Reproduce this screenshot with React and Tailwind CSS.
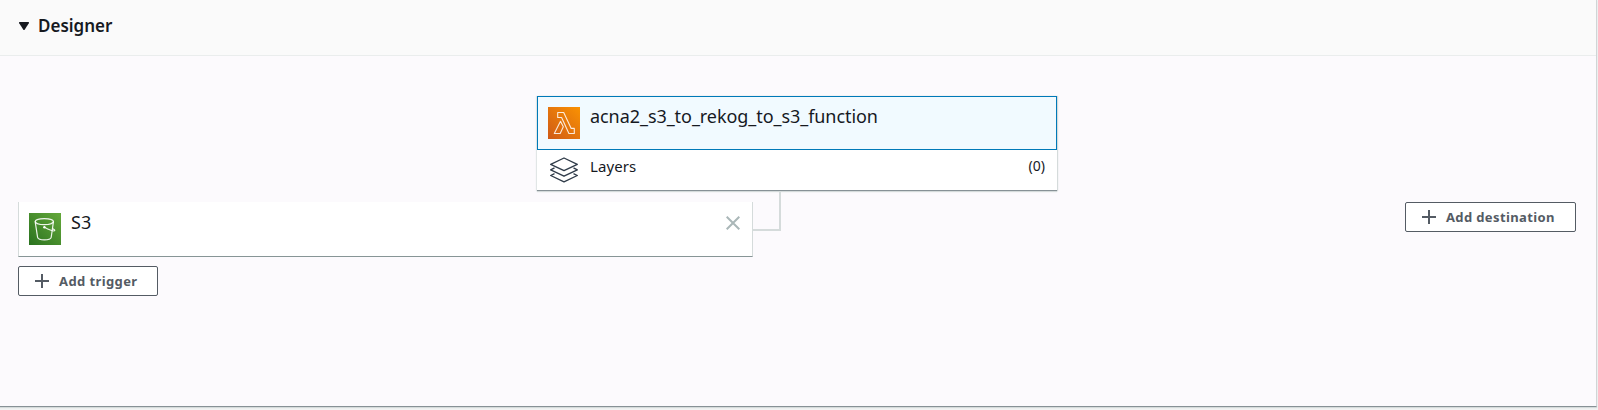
function LambdaIcon() {
  return (
    <svg width="32" height="32" viewBox="0 0 32 32" className="block shrink-0">
      <defs>
        <linearGradient id="lambdaFill" x1="0" y1="1" x2="1" y2="0">
          <stop offset="0" stopColor="#cf5a17" />
          <stop offset="1" stopColor="#fa9202" />
        </linearGradient>
      </defs>
      <rect width="32" height="32" fill="url(#lambdaFill)" />
      <path
        d="M9.7 5.5H15.7L23.2 21.4H26.3V26.5H20.9L13.6 10.5H9.7ZM12.5 14.3L15.3 19.8L12.2 26.5H6.3Z"
        fill="none"
        stroke="#fff"
        strokeOpacity="0.85"
        strokeWidth="1.1"
        strokeLinejoin="round"
      />
    </svg>
  );
}

function BucketIcon() {
  return (
    <svg width="32" height="32" viewBox="0 0 32 32" className="block shrink-0">
      <defs>
        <linearGradient id="bucketFill" x1="0" y1="1" x2="1" y2="0">
          <stop offset="0" stopColor="#2a721f" />
          <stop offset="1" stopColor="#64a83a" />
        </linearGradient>
      </defs>
      <rect width="32" height="32" fill="url(#bucketFill)" />
      <g fill="none" stroke="#fff" strokeOpacity="0.9" strokeWidth="1.2" strokeLinecap="round">
        <ellipse cx="15.3" cy="8.6" rx="9.1" ry="3" />
        <path d="M6.2 8.8L8.6 24.3C9.5 27.6 21.3 27.6 22.2 24.3L24.4 8.8" />
        <path d="M15.5 14.3C18.3 15.8 24.8 18.7 25.7 17.7C26 17.2 25 16.4 23.8 15.8" />
      </g>
      <circle cx="15.4" cy="14.2" r="1.2" fill="#fff" />
    </svg>
  );
}

function LayersIcon() {
  return (
    <svg width="28" height="26" viewBox="0 0 28 26" className="block" fill="none" stroke="#2f3b49" strokeWidth="1.35" strokeLinejoin="round">
      <path d="M14 1L27.3 7.3L14 13.6L0.7 7.3Z" />
      <path d="M4.5 10.9L0.7 12.9L14 19.2L27.3 12.9L23.5 10.9" />
      <path d="M4.5 16.6L0.7 18.5L14 24.8L27.3 18.5L23.5 16.6" />
    </svg>
  );
}

function AddButton({ label, className, textClass }) {
  return (
    <button className={"flex h-[30px] items-center rounded-[2px] border border-[#545b64] bg-white pl-4 text-[#545b64] " + className}>
      <svg width="14" height="14" viewBox="0 0 14 14" className="block shrink-0" stroke="#545b64" strokeWidth="2">
        <path d="M7 0V14M0 7H14" />
      </svg>
      <span className={"ml-[10px] whitespace-nowrap text-[13px] leading-5 font-bold " + textClass}>{label}</span>
    </button>
  );
}

export default function App() {
  return (
    <div className="h-[410px] w-full bg-[#f2f3f3] pr-px font-['Noto_Sans',sans-serif] text-[#16191f]">
      <section className="flex h-[407px] flex-col border-r border-b border-r-[#d0d5d6] border-b-[#879196] bg-[#fcfafd] shadow-[0_1px_1px_0_#d5dbdb]">
        <header className="flex h-14 shrink-0 items-center border-b border-[#eaeded] bg-[#fafafa] pb-1 pl-[19px]">
          <svg width="10" height="8" viewBox="0 0 10 8" className="block" fill="#16191f">
            <path d="M0.5 0H9.5Q10.3 0.3 9.8 1.2L5.8 7.4Q5 8.4 4.2 7.4L0.2 1.2Q-0.3 0.3 0.5 0Z" />
          </svg>
          <h2 className="ml-[9px] text-[17px] leading-6 font-semibold">Designer</h2>
        </header>

        <div className="flex flex-col pt-10">
          <div className="ml-[537px] h-[95px] w-[520px] bg-white shadow-[0_1px_1px_0_#d5dbdb,1px_0_1px_0_#d5dbdb,-1px_0_1px_0_#e4e8e9]">
            <div className="flex h-[54px] border border-[#0079b8] bg-[#f1faff] pt-[10px] pl-[10px]">
              <LambdaIcon />
              <span className="-mt-px ml-[10px] text-[18px] leading-5 tracking-[-0.06px]">acna2_s3_to_rekog_to_s3_function</span>
            </div>
            <div className="flex h-[41px] border-b border-[#879196] pt-[7px] pr-3 pl-[13px]">
              <LayersIcon />
              <span className="-mt-px ml-3 text-[15px] leading-5 tracking-[0.08px]">Layers</span>
              <span className="-mt-px ml-auto text-[14px] leading-5">(0)</span>
            </div>
          </div>

          <div className="flex items-start">
            <div className="ml-[18px] pt-[11px]">
              <div className="flex h-[55px] w-[735px] border-r border-b border-l border-r-[#d5dbdb] border-b-[#879596] border-l-[#d5dbdb] bg-white pt-[11px] pr-3 pl-[10px]">
                <BucketIcon />
                <span className="-mt-px ml-[10px] text-[18px] leading-5">S3</span>
                <svg width="14" height="14" viewBox="0 0 14 14" className="mt-[3px] ml-auto block" stroke="#aab7b8" strokeWidth="2">
                  <path d="M0.7 0.7L13.3 13.3M13.3 0.7L0.7 13.3" />
                </svg>
              </div>
              <AddButton label="Add trigger" className="mt-[9px] w-[140px]" textClass="tracking-[0.4px]" />
            </div>
            <div className="h-10 w-7 border-r-2 border-b-2 border-[#d5dbdb]" />
            <AddButton label="Add destination" className="mt-[11px] mr-[20px] ml-auto w-[171px]" textClass="tracking-[0.37px]" />
          </div>
        </div>
      </section>
    </div>
  );
}
